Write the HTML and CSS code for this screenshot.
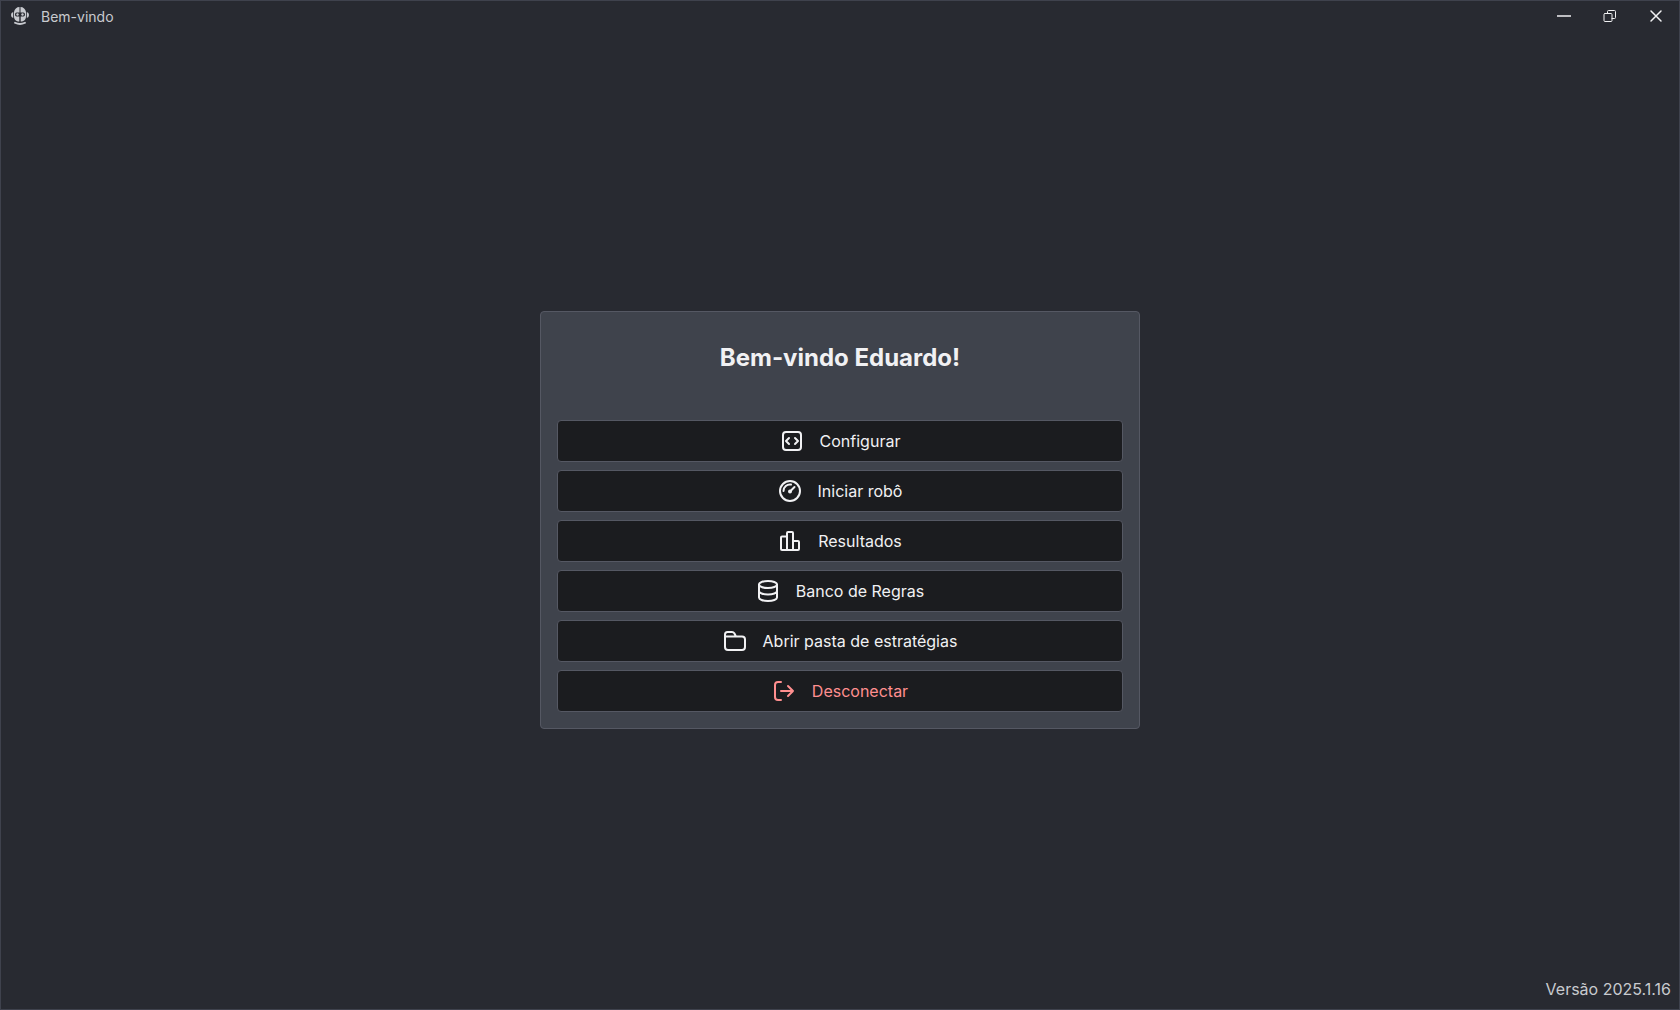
FILE: index.html
```html
<!DOCTYPE html>
<html lang="pt-BR">
<head>
    <meta charset="UTF-8">
    <meta name="viewport" content="width=device-width, initial-scale=1.0">
    <title>Bem-vindo</title>
    <link rel="stylesheet" href="styles.css">
</head>
<body>
    <header class="titlebar">
        <svg class="logo" viewBox="0 0 20 20" aria-hidden="true">
            <path fill="currentColor" fill-rule="evenodd" d="M9.500 1v5.500H6.500Q5 6.500 5 8.500T6.500 10.500h2.800v5C6.200 15.500 4 13.500 4 10.500V6C4.500 3 6.700 1 9.500 1zM10.500 1v5.500h3Q15 6.500 15 8.500T13.500 10.500h-2.800v5c3.100 0 5.300-2 5.300-5V6c-.5-3-2.700-5-5.500-5z"/>
            <path fill="currentColor" d="M3.200 6v6Q1 11.500 1 9t2.200-3zM16.800 6v6Q19 11.500 19 9t-2.200-3z"/>
            <circle cx="7.500" cy="8.500" r="1.200" fill="currentColor"/>
            <circle cx="12.500" cy="8.500" r="1.200" fill="currentColor"/>
            <path d="M5 16.800q5 2.400 10 0" fill="none" stroke="currentColor" stroke-width="1.800"/>
        </svg>
        <span class="window-title">Bem-vindo</span>
        <div class="window-controls">
            <button type="button" aria-label="Minimizar">
                <svg viewBox="0 0 14 14"><path d="M0 7h14" stroke-width="1.500"/></svg>
            </button>
            <button type="button" aria-label="Restaurar">
                <svg viewBox="0 0 14 14"><rect x="1" y="4.500" width="8" height="8" rx="1"/><path d="M4.500 4.500v-2q0-1 1-1h6q1 0 1 1v6q0 1-1 1h-2.500"/></svg>
            </button>
            <button type="button" aria-label="Fechar">
                <svg viewBox="0 0 14 14"><path d="M2 2l10 10M12 2L2 12" stroke-width="1.500"/></svg>
            </button>
        </div>
    </header>

    <main>
        <section class="card">
            <h1>Bem-vindo Eduardo!</h1>
            <div class="menu">
                <button type="button">
                    <svg viewBox="0 0 24 24"><rect x="3" y="3" width="18" height="18" rx="3"/><path d="M9 9l-3 3 3 3M15 9l3 3-3 3"/></svg>
                    Configurar
                </button>
                <button type="button">
                    <svg viewBox="0 0 24 24"><circle cx="12" cy="12" r="10"/><path d="M5.500 12A6.500 6.500 0 0 1 13 5.600M12 12.500L16.500 8"/><circle class="dot" cx="12" cy="12.500" r="2"/></svg>
                    Iniciar robô
                </button>
                <button type="button">
                    <svg viewBox="0 0 24 24"><path d="M9 21V4q0-1 1-1h4q1 0 1 1v17M9 7.500H4q-1 0-1 1V20q0 1 1 1h16q1 0 1-1v-7q0-1-1-1h-5"/></svg>
                    Resultados
                </button>
                <button type="button">
                    <svg viewBox="0 0 24 24"><ellipse cx="12" cy="5.500" rx="9" ry="3.500"/><path d="M3 5.500v13c0 2 4 3.500 9 3.500s9-1.500 9-3.500v-13M3 12c0 2 4 3.500 9 3.500s9-1.500 9-3.500"/></svg>
                    Banco de Regras
                </button>
                <button type="button">
                    <svg viewBox="0 0 24 24"><path d="M2 7.500V18q0 3 3 3h14q3 0 3-3v-7.500q0-3-3-3zV5.500q0-2.500 2.500-2.500H9q1.500 0 2.300 1.200L13 7.500"/></svg>
                    Abrir pasta de estratégias
                </button>
                <button type="button" class="logout">
                    <svg viewBox="0 0 24 24"><path d="M9 3H6Q3 3 3 6v12q0 3 3 3h3M9 12h12M16 7l5 5-5 5"/></svg>
                    Desconectar
                </button>
            </div>
        </section>
    </main>

    <footer>Versão 2025.1.16</footer>
</body>
</html>
```

FILE: styles.css
```css
* {
    box-sizing: border-box;
}
body {
    margin: 0;
    min-height: 100vh;
    display: grid;
    grid-template-rows: 30px 1fr;
    font-family: Inter, sans-serif;
    font-size: 16px;
    line-height: 24px;
    background-color: #282a31;
    color: #f1f1f3;
    border: 1px solid #3f424d;
}
button {
    font: inherit;
    color: inherit;
    border: none;
    background: none;
    cursor: pointer;
}
svg {
    fill: none;
    stroke: currentColor;
    stroke-linejoin: round;
    stroke-linecap: round;
}
.titlebar {
    display: flex;
    align-items: center;
    padding-left: 9px;
}
.logo {
    width: 20px;
    height: 20px;
    margin-right: 11px;
    color: #c8cacf;
    stroke: none;
}
.window-title {
    padding-top: 2px;
    font-size: 14px;
    color: #c8cacf;
}
.window-controls {
    display: flex;
    height: 100%;
    margin-left: auto;
}
.window-controls button {
    width: 46px;
    padding: 0;
    display: flex;
    align-items: center;
    justify-content: center;
}
.window-controls svg {
    width: 14px;
    height: 14px;
}
.window-controls button:hover {
    background-color: #3f434c;
}
main {
    display: flex;
    align-items: center;
    justify-content: center;
}
.card {
    width: 100%;
    max-width: 600px;
    padding: 16px;
    background-color: #3f434c;
    border: 1px solid #555863;
    border-radius: 4px;
}
h1 {
    margin: 14px 0 46px;
    font-size: 24px;
    line-height: 32px;
    font-weight: 700;
    text-align: center;
}
.menu {
    display: flex;
    flex-direction: column;
    gap: 8px;
}
.menu button {
    height: 42px;
    display: flex;
    align-items: center;
    justify-content: center;
    gap: 16px;
    background-color: #1b1c1f;
    border: 1px solid #555863;
    border-radius: 4px;
}
.menu svg {
    width: 24px;
    height: 24px;
    stroke-width: 2;
}
.menu .dot {
    fill: currentColor;
    stroke: none;
}
.menu button:hover {
    background-color: #282a31;
}
.menu .logout {
    color: #ff8f8f;
}
footer {
    position: absolute;
    right: 9px;
    bottom: 9px;
    color: #c8cacf;
}
```
